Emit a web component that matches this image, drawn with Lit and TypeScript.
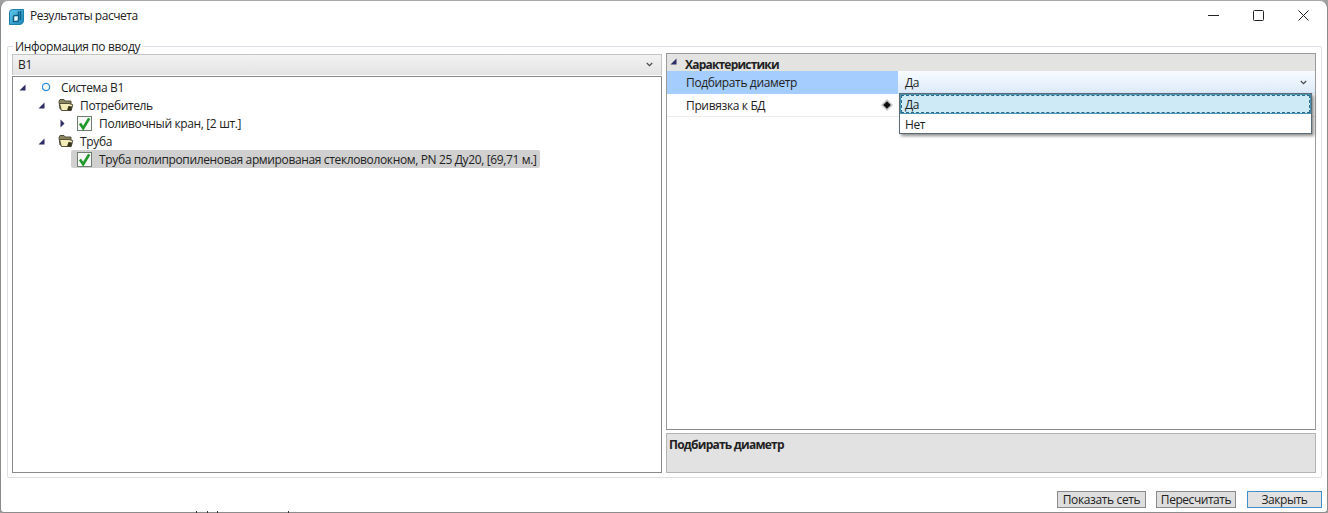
import { LitElement, html, css, svg } from "lit";
import { customElement } from "lit/decorators.js";

type Node = { d: number; exp: "open" | "closed" | ""; icon: "ring" | "folder" | "check"; text: string; sel?: boolean };
const nodes: Node[] = [
  { d: 0, exp: "open", icon: "ring", text: "Система В1" },
  { d: 1, exp: "open", icon: "folder", text: "Потребитель" },
  { d: 2, exp: "closed", icon: "check", text: "Поливочный кран, [2 шт.]" },
  { d: 1, exp: "open", icon: "folder", text: "Труба" },
  { d: 2, exp: "", icon: "check", text: "Труба полипропиленовая армированая стекловолокном, PN 25 Ду20, [69,71 м.]", sel: true },
];

const specks = [196, 207, 217, 288];

const icons = {
  ring: svg`<svg width="10" height="10" viewBox="0 0 10 10"><circle cx="4" cy="5" r="3.6" fill="none" stroke="#2f8fd8" stroke-width="1.3"/></svg>`,
  folder: svg`<svg width="16" height="14" viewBox="0 0 16 14"><path d="M1 3.5 2 1.5h4l1 1.5h6v8H2z" fill="#8c8660" stroke="#45422e" stroke-width=".9"/><path d="M1.5 5.5h9.5l3.8 1.2-1.6 5.8H3.4z" fill="#f3ebb8" stroke="#45422e" stroke-width=".9"/><path d="M10.5 8l3.6.4-1 4.1H9z" fill="#35331f"/></svg>`,
  check: svg`<svg width="15" height="15" viewBox="0 0 15 15"><rect x=".5" y=".5" width="14" height="14" fill="#f8f8f8" stroke="#6f7f6f"/><path d="M3 7.4 6.2 12.2 12.2 2.4" fill="none" stroke="#1f9a2b" stroke-width="2.7"/></svg>`,
};

const chevron = svg`<svg width="7" height="5" viewBox="0 0 7 5"><path d="M.8 1 3.5 3.7 6.2 1" fill="none" stroke="#444" stroke-width="1.1"/></svg>`;

@customElement("app-root")
export class AppRoot extends LitElement {
  static styles = css`
    :host { display: block; position: relative; width: 1328px; height: 513px; background: #a0a0a0; overflow: hidden;
      font: 12px "Open Sans", "Liberation Sans", sans-serif; letter-spacing: -0.36px; color: #222; }
    .speck { position: absolute; bottom: 0; width: 1px; height: 2px; background: #333; }
    .win { box-sizing: border-box; height: 513px; background: #fff; border: 1px solid #8c8c8c; border-top-color: #a8a8a8;
      border-radius: 8px 8px 4px 4px; display: flex; flex-direction: column; padding: 0 5px 0 6px; }
    .title { height: 31px; margin-left: 2px; display: flex; align-items: center; gap: 6px; }
    .title .name { flex: 1; margin-top: -2px; letter-spacing: -0.47px; }
    .wc { display: flex; align-items: center; gap: 34px; margin-right: 13px; margin-top: -2px; }
    .wc svg { display: block; }
    .group { position: relative; box-sizing: border-box; margin-top: 14px; height: 432px; width: 1315px; border: 1px solid #dcdfe3;
      border-radius: 2px; padding: 7px 4px 4px 4px; display: grid; grid-template-columns: 650px 650px; column-gap: 4px; }
    .legend { position: absolute; left: 5px; top: -8px; padding: 0 2px; background: #fff; line-height: 15px; }
    .left, .right { display: flex; flex-direction: column; min-width: 0; }
    .combo { height: 21px; box-sizing: border-box; background: linear-gradient(#f2f2f2, #e4e4e4); border: 1px solid #c4c4c4; border-bottom: 0;
      display: flex; align-items: center; justify-content: space-between; padding: 0 8px 2px 5px; }
    .tree { flex: 1; margin-top: 1px; border: 1px solid #8a8a8a; padding-top: 1px; }
    .row { height: 18px; display: flex; align-items: center; }
    .exp { width: 16px; flex: none; display: flex; align-items: center; }
    .exp .shift { margin-left: 3px; display: flex; }
    .content { display: flex; align-items: center; height: 18px; margin-left: -2px; padding: 0 3px 0 2px; border-radius: 2px; }
    .content.sel { background: #d0d0d0; }
    .ic { width: 23px; height: 18px; display: flex; align-items: center; justify-content: center; flex: none; }
    .ic.check { justify-content: flex-start; padding-left: 4px; box-sizing: border-box; }
    .tx { margin-left: 3px; white-space: nowrap; }
    .grid { position: relative; height: 377px; box-sizing: border-box; margin-top: -1px; border: 1px solid #9a9a9a; border-bottom-color: #8a8a8a; }
    .cat { height: 17px; background: #e3e3e1; display: flex; align-items: center; font-weight: 700; letter-spacing: -0.8px; padding: 3px 0 0 3px; box-sizing: border-box; }
    .cat .tri { width: 15px; display: flex; margin-top: -5px; }
    .prop { display: grid; grid-template-columns: 231px 1fr; height: 22px; align-items: center; }
    .prop.selrow { height: 23px; }
    .prop .k { padding-left: 19px; height: 100%; display: flex; align-items: center; justify-content: space-between; padding-right: 5px; box-sizing: border-box; }
    .selrow .k { background: #a5cdfd; }
    .selrow .v { height: 100%; background: linear-gradient(#f7fbff, #dce9f9); display: flex; align-items: center; justify-content: space-between; padding: 0 8px 0 7px; }
    .plain { border-bottom: 1px solid #ececec; }
    .menu { position: absolute; left: 232px; top: 39px; width: 413px; height: 41px; box-sizing: border-box; background: #fff;
      border: 1px solid #5c6b78; box-shadow: 2px 2px 3px rgba(0,0,0,.45); }
    .item { height: 20px; display: flex; align-items: center; padding-left: 5px; box-sizing: border-box; }
    .item.on { background: #cdeaf6; border: 1px solid #4a93b3; outline: 1px dashed #2a6a8a; outline-offset: -2px; padding-left: 4px; }
    .desc { margin-top: 3px; height: 40px; box-sizing: border-box; background: #e2e2e2; border: 1px solid #b4b4b4; padding: 3px 2px; font-weight: 700; letter-spacing: -0.76px; line-height: 16px; }
    .foot { display: flex; justify-content: flex-end; align-items: flex-start; margin-top: 13px; padding-right: 0; }
    .btn { box-sizing: border-box; height: 17px; background: #dedede; border: 1px solid #8a8a8a; display: flex; align-items: center; justify-content: center; line-height: 15px; }
    .b1 { width: 89px; } .b2 { width: 80px; margin-left: 10px; letter-spacing: -0.45px; } .b3 { width: 75px; margin-left: 11px; background: #e2e2e2; border-color: #3f8fcc; letter-spacing: -0.45px; }
  `;

  private tri(open: boolean) {
    return open
      ? svg`<svg width="7" height="7" viewBox="0 0 7 7"><path d="M6.5 .5V6.5H.5z" fill="#2c2c66"/></svg>`
      : svg`<svg width="5" height="9" viewBox="0 0 5 9"><path d="M.5 .5 4.5 4.5 .5 8.5z" fill="#2c2c66"/></svg>`;
  }

  render() {
    return html`<div class="win">
      <div class="title">
        <svg width="15" height="16" viewBox="0 0 15 16"><defs><linearGradient id="lg" x1="0" y1="0" x2="1" y2="1"><stop offset="0" stop-color="#62c8ee"/><stop offset="1" stop-color="#1d86b8"/></linearGradient></defs><path d="M3.5 .5h11V11q0 4.5-4.5 4.5H.5V3.5Q.5 .5 3.5 .5z" fill="url(#lg)" stroke="#1c7fa8"/><path d="M9.5 2.5v8.2q0 1.8-1.8 1.8H4.5V8q0-1.5 1.5-1.5H9.5" fill="#e6f8ff" stroke="#0c5f85" stroke-width="1.4"/><path d="M11.5 2v9" stroke="#0c5f85" stroke-width="1.6"/></svg>
        <span class="name">Результаты расчета</span>
        <div class="wc">
          <svg width="11" height="11" viewBox="0 0 11 11"><path d="M0 5.5h11" stroke="#222"/></svg>
          <svg width="11" height="11" viewBox="0 0 11 11"><rect x=".5" y=".5" width="10" height="10" rx="1" fill="none" stroke="#222"/></svg>
          <svg width="11" height="11" viewBox="0 0 11 11"><path d="M.5 .5l10 10M10.5 .5l-10 10" stroke="#222"/></svg>
        </div>
      </div>
      <div class="group">
        <span class="legend">Информация по вводу</span>
        <div class="left">
          <div class="combo"><span>В1</span>${chevron}</div>
          <div class="tree">
            ${nodes.map((n) => html`<div class="row" style="padding-left:${6 + 19 * n.d}px">
              <span class="exp">${n.exp === "closed" ? html`<span class="shift">${this.tri(false)}</span>` : n.exp ? this.tri(true) : ""}</span>
              <span class="content ${n.sel ? "sel" : ""}">
                <span class="ic ${n.icon}">${icons[n.icon]}</span><span class="tx">${n.text}</span>
              </span>
            </div>`)}
          </div>
        </div>
        <div class="right">
          <div class="grid">
            <div class="cat"><span class="tri">${this.tri(true)}</span>Характеристики</div>
            <div class="prop selrow"><div class="k">Подбирать диаметр</div><div class="v"><span>Да</span>${chevron}</div></div>
            <div class="prop plain"><div class="k"><span>Привязка к БД</span>
              <svg width="12" height="12" viewBox="0 0 11 11"><path d="M5.5 0 11 5.5 5.5 11 0 5.5z" fill="#c8c8c8"/><path d="M5.5 2 9 5.5 5.5 9 2 5.5z" fill="#111"/></svg></div><div></div></div>
            <div class="menu"><div class="item on">Да</div><div class="item">Нет</div></div>
          </div>
          <div class="desc">Подбирать диаметр</div>
        </div>
      </div>
      <div class="foot">
        <div class="btn b1">Показать сеть</div>
        <div class="btn b2">Пересчитать</div>
        <div class="btn b3">Закрыть</div>
      </div>
    </div>
    ${specks.map((x) => html`<i class="speck" style="left:${x}px"></i>`)}`;
  }
}
